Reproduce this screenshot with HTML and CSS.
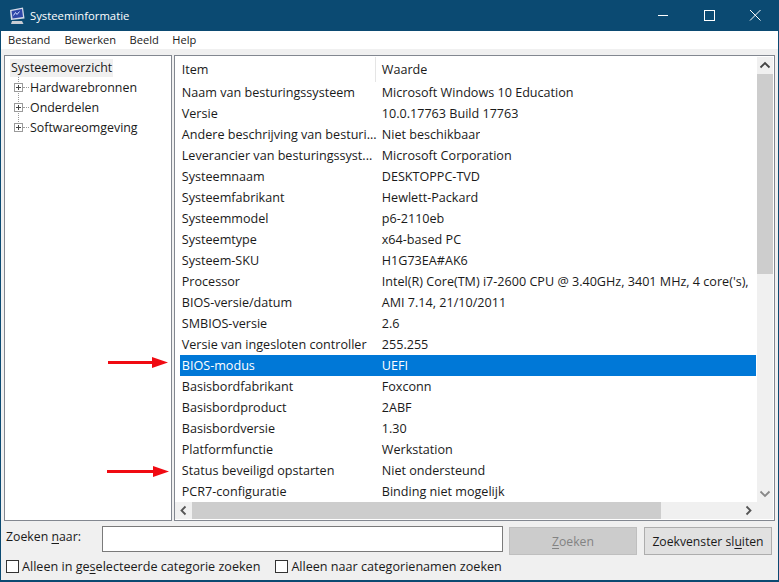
FILE: index.html
```html
<!DOCTYPE html>
<html lang="nl">
<head>
<meta charset="utf-8">
<title>Systeeminformatie</title>
<link rel="stylesheet" href="styles.css">
</head>
<body>
<div class="window">
  <header class="titlebar">
    <svg class="app-icon" width="16" height="18" viewBox="0 0 16 18">
      <path d="M1 3l13-2.500 1.500 11L2 13z" fill="#d5dbe8"/>
      <path d="M2.500 4l10.500-2 1 8-10.500 1.500z" fill="#2f47a8"/>
      <path d="M4.500 8.500l2-3 1.500 2 2.500-3" stroke="#cfd9ff" stroke-width="1" fill="none"/>
      <path d="M3 14h10l1.500 3H2z" fill="#c9ccd3"/>
    </svg>
    <span class="title">Systeeminformatie</span>
    <div class="controls">
      <svg width="46" height="31" viewBox="0 0 46 31"><path d="M18 15.500h10" stroke="#fff" fill="none"/></svg>
      <svg width="46" height="31" viewBox="0 0 46 31"><rect x="18.500" y="10.500" width="10" height="10" stroke="#fff" fill="none"/></svg>
      <svg width="46" height="31" viewBox="0 0 46 31"><path d="M18 10l10.500 10.500M28.500 10L18 20.500" stroke="#fff" fill="none"/></svg>
    </div>
  </header>
  <nav class="menubar">
    <span>Bestand</span><span>Bewerken</span><span>Beeld</span><span>Help</span>
  </nav>
  <main class="panes">
    <aside class="tree">
      <div class="tree-root"><span class="tree-selected">Systeemoverzicht</span></div>
      <div class="tree-children">
        <div class="tree-node"><span class="expander"></span><span class="dots"></span>Hardwarebronnen</div>
        <div class="tree-node"><span class="expander"></span><span class="dots"></span>Onderdelen</div>
        <div class="tree-node"><span class="expander"></span><span class="dots"></span>Softwareomgeving</div>
      </div>
    </aside>
    <section class="details">
      <div class="list-area">
        <div class="list">
          <div class="row head"><span class="c1">Item</span><span class="c2">Waarde</span></div>
          <div class="row"><span class="c1">Naam van besturingssysteem</span><span class="c2">Microsoft Windows 10 Education</span></div>
          <div class="row"><span class="c1">Versie</span><span class="c2">10.0.17763 Build 17763</span></div>
          <div class="row"><span class="c1">Andere beschrijving van besturi...</span><span class="c2">Niet beschikbaar</span></div>
          <div class="row"><span class="c1">Leverancier van besturingssyst...</span><span class="c2">Microsoft Corporation</span></div>
          <div class="row"><span class="c1">Systeemnaam</span><span class="c2">DESKTOPPC-TVD</span></div>
          <div class="row"><span class="c1">Systeemfabrikant</span><span class="c2">Hewlett-Packard</span></div>
          <div class="row"><span class="c1">Systeemmodel</span><span class="c2">p6-2110eb</span></div>
          <div class="row"><span class="c1">Systeemtype</span><span class="c2">x64-based PC</span></div>
          <div class="row"><span class="c1">Systeem-SKU</span><span class="c2">H1G73EA#AK6</span></div>
          <div class="row"><span class="c1">Processor</span><span class="c2">Intel(R) Core(TM) i7-2600 CPU @ 3.40GHz, 3401 MHz, 4 core('s),</span></div>
          <div class="row"><span class="c1">BIOS-versie/datum</span><span class="c2">AMI 7.14, 21/10/2011</span></div>
          <div class="row"><span class="c1">SMBIOS-versie</span><span class="c2">2.6</span></div>
          <div class="row"><span class="c1">Versie van ingesloten controller</span><span class="c2">255.255</span></div>
          <div class="row selected"><span class="c1">BIOS-modus</span><span class="c2">UEFI</span></div>
          <div class="row"><span class="c1">Basisbordfabrikant</span><span class="c2">Foxconn</span></div>
          <div class="row"><span class="c1">Basisbordproduct</span><span class="c2">2ABF</span></div>
          <div class="row"><span class="c1">Basisbordversie</span><span class="c2">1.30</span></div>
          <div class="row"><span class="c1">Platformfunctie</span><span class="c2">Werkstation</span></div>
          <div class="row"><span class="c1">Status beveiligd opstarten</span><span class="c2">Niet ondersteund</span></div>
          <div class="row"><span class="c1">PCR7-configuratie</span><span class="c2">Binding niet mogelijk</span></div>
        </div>
        <div class="vscroll">
          <svg class="arrow" width="16" height="17" viewBox="0 0 16 17"><path d="M3.500 10.500l4.500-4.500 4.500 4.500" stroke="#444" stroke-width="1.800" fill="none"/></svg>
          <div class="vtrack"><div class="vthumb"></div></div>
          <svg class="arrow" width="16" height="17" viewBox="0 0 16 17"><path d="M3.500 6.500l4.500 4.500 4.500-4.500" stroke="#888" stroke-width="1.800" fill="none"/></svg>
        </div>
      </div>
      <div class="hscroll">
        <svg class="arrow" width="17" height="17" viewBox="0 0 17 17"><path d="M10.500 4.500l-4 4 4 4" stroke="#555" stroke-width="1.800" fill="none"/></svg>
        <div class="htrack"><div class="hthumb"></div></div>
        <svg class="arrow" width="17" height="17" viewBox="0 0 17 17"><path d="M6.500 4.500l4 4-4 4" stroke="#555" stroke-width="1.800" fill="none"/></svg>
        <div class="corner"></div>
      </div>
    </section>
  </main>
  <form class="search">
    <label class="search-label">Zoeken <u>n</u>aar:</label>
    <div class="search-input"></div>
    <div class="btn disabled"><span><u>Z</u>oeken</span></div>
    <div class="btn">Zoekvenster sl<u>u</u>iten</div>
  </form>
  <div class="options">
    <label class="check"><span class="box"></span>Alleen in ge<u>s</u>electeerde categorie zoeken</label>
    <label class="check"><span class="box"></span>Alleen naar categorienamen zoeken</label>
  </div>
  <svg class="pointer p1" width="60" height="11" viewBox="0 0 60 11"><path d="M0 4h44V0l16 5.500-16 5.500V7H0z" fill="#f00a12"/></svg>
  <svg class="pointer p2" width="62" height="11" viewBox="0 0 62 11"><path d="M0 4h46V0l16 5.500-16 5.500V7H0z" fill="#f00a12"/></svg>
</div>
</body>
</html>
```

FILE: styles.css
```css
* { box-sizing: border-box; }
html, body { margin: 0; padding: 0; }
body {
  width: 779px;
  height: 582px;
  overflow: hidden;
  font-family: "Open Sans", "Noto Sans", sans-serif;
  font-size: 12px;
  color: #1a1a1a;
}
u { text-underline-offset: 2px; }
.window {
  position: relative;
  width: 779px;
  height: 582px;
  background: #f0f0f0;
  border: 1px solid #0b4a72;
  border-top: 0;
  border-bottom-width: 2px;
  display: flex;
  flex-direction: column;
}
.titlebar {
  height: 31px;
  margin: 0 -1px;
  background: #0b4a72;
  color: #fff;
  display: flex;
  align-items: center;
  padding-left: 9px;
  flex: none;
}
.app-icon { margin-right: 5px; }
.title { font-size: 11.3px; }
.controls { margin-left: auto; display: flex; margin-right: 1px; }
.controls svg { display: block; }
.menubar {
  height: 18px;
  background: #fff;
  display: flex;
  gap: 14px;
  align-items: center;
  padding: 0 0 2px 7px;
  font-size: 11.100px;
  flex: none;
}
.menubar span + span + span { margin-left: -0.5px; }
.panes {
  display: flex;
  height: 466px;
  margin: 6px 3px 0 3px;
  gap: 2px;
  flex: none;
}
.tree {
  width: 168px;
  background: #fff;
  border: 1px solid #828790;
  padding: 2px 0 0 5px;
  font-size: 12.4px;
}
.tree-root { height: 19px; display: flex; align-items: center; }
.tree-selected { background: #f0f0f0; padding: 0 1px; line-height: 18px; }
.tree-children {
  background: repeating-linear-gradient(#999 0 1px, transparent 1px 2px) 8px 0 / 1px 50px no-repeat;
}
.tree-node {
  height: 20px;
  display: flex;
  align-items: center;
  padding-left: 4px;
}
.expander {
  width: 9px;
  height: 9px;
  border: 1px solid #9a9a9a;
  background:
    linear-gradient(#444, #444) center / 5px 1px no-repeat,
    linear-gradient(#444, #444) center / 1px 5px no-repeat,
    #fff;
  flex: none;
}
.dots {
  width: 6px;
  margin-right: 1px;
  border-top: 1px dotted #999;
  flex: none;
}
.details {
  width: 602px;
  background: #fff;
  border: 1px solid #828790;
  padding: 1px 1px 1px 0;
  display: flex;
  flex-direction: column;
  font-size: 12.6px;
}
.list-area { flex: 1; display: flex; min-height: 0; }
.list { flex: 1; min-width: 0; overflow: hidden; }
.row {
  height: 21px;
  display: flex;
  align-items: center;
  white-space: nowrap;
  margin-left: 5px;
  margin-right: 1px;
}
.row.head { height: 25px; }
.c1 { width: 200px; padding-left: 2px; flex: none; overflow: hidden; }
.c2 { padding-left: 2px; overflow: hidden; }
.head .c2 {
  border-left: 1px solid #e5e5e5;
  padding-left: 6px;
  margin-left: -5px;
  height: 25px;
  line-height: 25px;
}
.head .c1 { line-height: 25px; }
.selected { background: #0078d7; color: #fff; }
.vscroll {
  width: 16px;
  background: #f0f0f0;
  display: flex;
  flex-direction: column;
  flex: none;
}
.arrow { display: block; flex: none; }
.vtrack { flex: 1; }
.vthumb { height: 200px; background: #cdcdcd; }
.hscroll {
  height: 17px;
  background: #f0f0f0;
  display: flex;
  flex: none;
}
.htrack { flex: 1; }
.hthumb { width: 469px; height: 17px; background: #cdcdcd; }
.corner { width: 16px; flex: none; background: #f0f0f0; }
.search {
  display: flex;
  align-items: flex-start;
  height: 26px;
  margin: 5px 6px 0 5px;
  flex: none;
}
.search-label { width: 96px; flex: none; font-size: 12.3px; line-height: 22px; }
.search-input {
  width: 401px;
  height: 26px;
  background: #fff;
  border: 1px solid #7a7a7a;
  flex: none;
}
.btn {
  width: 128px;
  height: 28px;
  margin: 1px 0 0 6px;
  display: flex;
  align-items: center;
  justify-content: center;
  background: #e1e1e1;
  border: 1px solid #adadad;
  font-size: 12.2px;
  flex: none;
}
.btn.disabled { background: #cccccc; border-color: #bfbfbf; color: #838383; }
.btn + .btn { margin-left: 7px; }
.options {
  display: flex;
  gap: 15px;
  margin: 6px 0 0 5px;
  font-size: 12.6px;
  flex: none;
}
.check { display: flex; align-items: center; }
.box {
  width: 13px;
  height: 13px;
  border: 1px solid #333;
  background: #fff;
  margin-right: 3px;
  flex: none;
}
.pointer { position: absolute; display: block; }
.p1 { left: 107px; top: 357px; }
.p2 { left: 106px; top: 466px; }
```
